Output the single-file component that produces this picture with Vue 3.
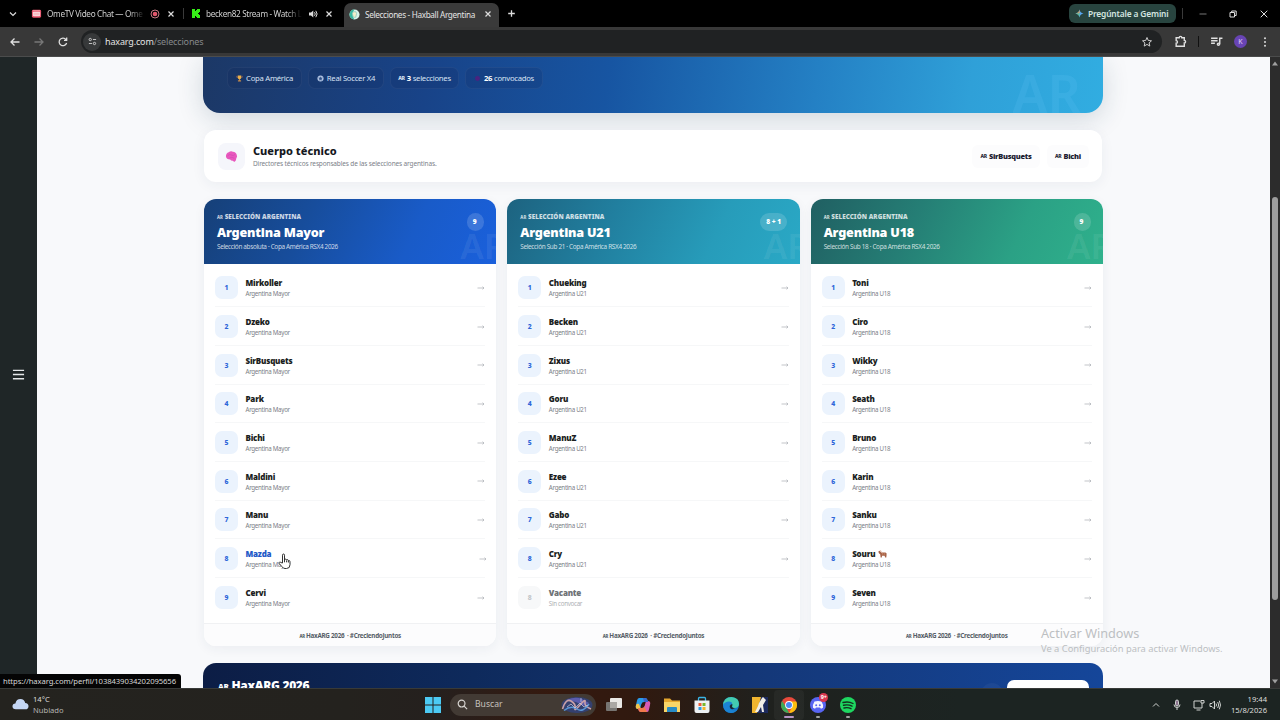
<script setup>
const chips = [
  { icon: 'cup', text: 'Copa América', width: 75 },
  { icon: 'ball', text: 'Real Soccer X4', width: 76 },
  { flag: true, strong: '3', text: 'selecciones', width: 69 },
  { icon: 'dot', strong: '26', text: 'convocados', width: 78 },
]

const teams = [
  {
    key: 'mayor',
    name: 'Argentina Mayor',
    detail: 'Selección absoluta · Copa América RSX4 2026',
    count: '9',
    players: ['Mirkoller', 'Dzeko', 'SirBusquets', 'Park', 'Bichi', 'Maldini', 'Manu', 'Mazda', 'Cervi'],
  },
  {
    key: 'u21',
    name: 'Argentina U21',
    detail: 'Selección Sub 21 · Copa América RSX4 2026',
    count: '8 + 1',
    players: ['Chueking', 'Becken', 'Zixus', 'Goru', 'ManuZ', 'Ezee', 'Gabo', 'Cry', 'Vacante'],
  },
  {
    key: 'u18',
    name: 'Argentina U18',
    detail: 'Selección Sub 18 · Copa América RSX4 2026',
    count: '9',
    players: ['Toni', 'Ciro', 'Wikky', 'Seath', 'Bruno', 'Karin', 'Sanku', 'Souru', 'Seven'],
  },
]

const isVacant = (player) => player === 'Vacante'
</script>

<template>
  <div class="screen">
    <div class="tabs">
      <svg class="tabs_chevron" viewBox="0 0 10 10"><path d="M2 3.5 5 6.5 8 3.5" /></svg>

      <div class="tab tab_ome">
        <svg class="favicon" viewBox="0 0 12 12">
          <rect x="1" y="2" width="10" height="8.5" rx="1.5" fill="#e8526a" />
          <rect x="2" y="4" width="8" height="5" rx="1" fill="#f9d5da" />
          <path d="M2 3h8M3 6.500h6" stroke="#f6a5ae" />
        </svg>
        <span class="tab_title">OmeTV Video Chat — Ome</span>
        <svg class="tab_rec" viewBox="0 0 10 10">
          <circle cx="5" cy="5" r="4" fill="none" stroke="#c47a84" />
          <circle cx="5" cy="5" r="2.300" fill="#e2566b" />
        </svg>
        <svg class="close" viewBox="0 0 8 8"><path d="M1.500 1.500l5 5M6.500 1.500l-5 5" /></svg>
      </div>

      <i class="tab_line"></i>

      <div class="tab tab_kick">
        <svg class="favicon" viewBox="0 0 10 10">
          <path d="M1 .500h3v2h1v-1h1v-1h3v3H8v1H7v1h1v1h1v3H6v-1H5v-1H4v2H1z" fill="#36ee17" />
        </svg>
        <span class="tab_title">becken82 Stream - Watch L</span>
        <svg class="tab_sound" viewBox="0 0 10 10">
          <path d="M1 3.500h2L5.300 1.500v7L3 6.500H1z" fill="#ddd" />
          <path d="M6.500 3.200q1.500 1.800 0 3.600M7.800 1.800q2.600 3.200 0 6.400" fill="none" stroke="#ddd" />
        </svg>
        <svg class="close" viewBox="0 0 8 8"><path d="M1.500 1.500l5 5M6.500 1.500l-5 5" /></svg>
      </div>

      <div class="tab tab_active">
        <svg class="favicon" viewBox="0 0 12 12">
          <circle cx="6" cy="6" r="5.500" fill="#d9f4e9" />
          <path d="M6 .500A5.500 5.500 0 0 0 6 11.500 8 8 0 0 1 6 .500" fill="#39b9a0" />
          <path d="M4.500 3h3l.800 2-1 4h-2.600l-1-4z" fill="#f3efc9" stroke="#64b8b3" stroke-width=".6" />
        </svg>
        <span class="tab_title">Selecciones - Haxball Argentina</span>
        <svg class="close" viewBox="0 0 8 8"><path d="M1.500 1.500l5 5M6.500 1.500l-5 5" /></svg>
      </div>

      <svg class="tabs_plus" viewBox="0 0 10 10"><path d="M5 2v6M2 5h6" /></svg>

      <div class="gemini">
        <svg viewBox="0 0 10 10">
          <path d="M5 .500Q5.600 4.400 9.500 5 5.600 5.600 5 9.500 4.400 5.600 .500 5 4.400 4.400 5 .500" fill="#58a6f2" />
          <path d="M5 .500Q5.300 3 5 5H.500Q4.400 4.400 5 .500" fill="#d8a25d" />
          <path d="M.500 5H5v4.500Q4.400 5.600 .500 5" fill="#5fc08a" />
        </svg>
        <span>Pregúntale a Gemini</span>
      </div>
      <i class="tab_line window_line"></i>
      <svg class="window_btn btn_min" viewBox="0 0 10 10"><path d="M1.500 5h7" stroke="#777" /></svg>
      <svg class="window_btn btn_max" viewBox="0 0 10 10">
        <path d="M2 3.500h4.500V8H2zM3.700 3.300V2h4.500v4.500H6.800" />
      </svg>
      <svg class="window_btn" viewBox="0 0 10 10"><path d="M1.700 1.700l6.600 6.600M8.300 1.700L1.700 8.300" /></svg>
    </div>

    <div class="toolbar">
      <svg class="nav_icon" viewBox="0 0 12 12"><path d="M10.500 6H2M5.500 2.500 2 6l3.500 3.500" /></svg>
      <svg class="nav_icon nav_off" viewBox="0 0 12 12"><path d="M1.500 6H10M6.500 2.500 10 6l-3.500 3.500" /></svg>
      <svg class="nav_icon" viewBox="0 0 12 12"><path d="M9.600 7A3.800 3.800 0 1 1 9 3.600M9.700 1.600v2.700H7" /></svg>
      <div class="address">
        <span class="site_info">
          <svg viewBox="0 0 10 10">
            <path d="M5.500 2.800H9M1 7.200h3.500" />
            <circle cx="2.500" cy="2.800" r="1.300" />
            <circle cx="7.200" cy="7.200" r="1.300" />
          </svg>
        </span>
        <span class="url">haxarg.com<em>/selecciones</em></span>
        <svg class="star" viewBox="0 0 12 12">
          <path d="M6 1.500l1.300 3 3.200.300-2.400 2.100.700 3.200L6 8.400l-2.800 1.700.700-3.200-2.400-2.100 3.200-.300z" />
        </svg>
      </div>
      <svg class="bar_icon icon_ext" viewBox="0 0 12 12">
        <path d="M2 2.500h2.800a1.200 1.200 0 0 1 2.400 0H9.500V5a1.200 1.200 0 0 1 0 2.400v3H2V7.600a1.200 1.200 0 0 0 0-2.400z" />
      </svg>
      <i class="bar_line"></i>
      <svg class="bar_icon icon_music" viewBox="0 0 12 12">
        <path d="M1 3h6M1 5.300h6M1 7.600h3.500M9 8.500V3h2.500" />
        <circle cx="7.800" cy="8.500" r="1" />
      </svg>
      <span class="avatar">K</span>
      <svg class="bar_dots" viewBox="0 0 4 12">
        <circle cx="2" cy="2.300" r="1" /><circle cx="2" cy="6" r="1" /><circle cx="2" cy="9.700" r="1" />
      </svg>
    </div>

    <div class="viewport">
      <aside class="sidebar">
        <svg viewBox="0 0 14 14"><path d="M1 2.500h12M1 7h12M1 11.500h12" /></svg>
      </aside>

      <main class="page">
        <section class="hero">
          <div v-for="chip in chips" :key="chip.text" class="chip" :style="{ width: chip.width + 'px' }">
            <svg v-if="chip.icon === 'cup'" viewBox="0 0 8 8">
              <path d="M2 .500h4v2.500q0 1.500-2 2-2-.500-2-2z" fill="#e8b04b" />
              <path d="M1 1v1.500l1 1M7 1v1.500l-1 1" fill="none" stroke="#d97b4a" stroke-width=".7" />
              <path d="M3.500 4.500h1v1.500h1.300v1.500H2.200V6h1.300z" fill="#c58a4a" />
            </svg>
            <svg v-else-if="chip.icon === 'ball'" viewBox="0 0 8 8">
              <circle cx="4" cy="4" r="3.500" fill="#b3c6e4" />
              <path d="M4 2.400l1.600 1.200L5 5.500H3L2.400 3.600zM1 2l1 .500M7 2l-1 .500M2 7l.600-1M6 7l-.600-1" fill="#2f4f86" stroke="#2f4f86" stroke-width=".5" />
            </svg>
            <svg v-else-if="chip.icon === 'dot'" viewBox="0 0 8 8"><circle cx="4" cy="4" r="2.800" fill="#4a2380" /></svg>
            <small v-if="chip.flag">AR</small>
            <span><b v-if="chip.strong">{{ chip.strong }}</b> {{ chip.text }}</span>
          </div>
          <span class="hero_mark">AR</span>
        </section>

        <section class="staff">
          <div class="staff_icon">
            <svg viewBox="0 0 14 14">
              <path d="M1 7Q1 3.500 4 2.500 6 .800 8.500 1.800 12 2 12.700 5.500q.800 2-.500 3.500 0 2.500-1.700 3.600Q9.500 13 8.500 11.500 7 12 5.500 10.300 1.500 10 1 7" fill="#e858bd" />
              <path d="M3 6q2-2 4-.500t4-1M5 8.500q2.500-1.500 5 .500" fill="none" stroke="#d64bb6" stroke-width=".9" />
            </svg>
          </div>
          <div class="staff_text">
            <h2>Cuerpo técnico</h2>
            <p>Directores técnicos responsables de las selecciones argentinas.</p>
          </div>
          <div class="coach"><small>AR</small><b>SirBusquets</b></div>
          <div class="coach coach_short"><small>AR</small><b>Bichi</b></div>
        </section>

        <div class="teams">
          <article v-for="team in teams" :key="team.key" class="team">
            <header :class="['team_head', team.key]">
              <p class="team_label"><small>AR</small> SELECCIÓN ARGENTINA</p>
              <h3>{{ team.name }}</h3>
              <p class="team_detail">{{ team.detail }}</p>
              <span class="team_mark">AR</span>
              <span class="team_count">{{ team.count }}</span>
            </header>
            <ul>
              <li
                  v-for="(player, index) in team.players"
                  :key="player"
                  :class="{ vacant: isVacant(player), hovered: player === 'Mazda' }"
              >
                <span class="number">{{ isVacant(player) ? 8 : index + 1 }}</span>
                <div class="player">
                  <b>
                    {{ player }}
                    <svg v-if="player === 'Souru'" viewBox="0 0 10 9">
                      <path d="M.500 1.500 2 .800l1.500 2h4.700l1.300 1v2.200l-.300 2.500H8L7.300 6.500H4.500L4.200 8.500H2.900L2.500 5 .800 3.500z" fill="#a86449" />
                      <path d="M2.500 .500l1.500 1.200M5 3.200v2M7 3.500v2" stroke="#d49270" stroke-width=".7" />
                    </svg>
                  </b>
                  <span>{{ isVacant(player) ? 'Sin convocar' : team.name }}</span>
                </div>
                <svg v-if="!isVacant(player)" class="arrow" viewBox="0 0 8 6">
                  <path d="M.500 3h6.500M5.500 1.700 7 3 5.500 4.300" />
                </svg>
              </li>
            </ul>
            <footer><small>AR</small> HaxARG 2026 &nbsp;· #CreciendoJuntos</footer>
          </article>
        </div>

        <section class="closing">
          <h2><small>AR</small> HaxARG 2026</h2>
          <i class="closing_glow"></i>
          <i class="closing_btn"></i>
        </section>

        <div class="activate">
          <p class="activate_title">Activar Windows</p>
          <p class="activate_text">Ve a Configuración para activar Windows.</p>
        </div>
      </main>

      <div class="scrollbar">
        <svg viewBox="0 0 6 5"><path d="M3 .500 6 4.500H0z" /></svg>
        <i></i>
        <svg viewBox="0 0 6 5"><path d="M3 4.500 6 .500H0z" /></svg>
      </div>

      <div class="status">https://haxarg.com/perfil/1038439034202095656</div>
      <svg class="pointer" viewBox="0 0 13 17">
        <path d="M4.500 10V2.200q0-1.200 1-1.200t1 1.200V7q.200-1 1.100-.900 1 .100 1 1.100.300-.800 1-.600.800.200.800 1.200.300-.500.900-.300.700.200.700 1.200v3q0 3.800-3.500 3.800H7Q5.200 15.500 4 13.700L1.200 10.500q-.600-.900.200-1.300.800-.400 1.600.400z" />
        <path d="M6.500 7v2.300M8.600 7.500v1.800M10.400 8v1.500" />
      </svg>
    </div>

    <div class="taskbar">
      <div class="weather">
        <svg viewBox="0 0 18 13">
          <path d="M4 12Q.500 12 .500 8.800.500 6 3.600 5.700 4.500 1 9 1q4 0 5 4.200 3.500.300 3.500 3.500Q17.500 12 14 12z" fill="#c5d7f5" />
        </svg>
        <p>14°C<br><span>Nublado</span></p>
      </div>

      <div class="apps">
        <svg class="app_win" viewBox="0 0 16 16">
          <path d="M0 0h7.500v7.500H0zM8.500 0H16v7.500H8.500zM0 8.500h7.500V16H0zM8.500 8.500H16V16H8.500z" fill="#4ccaf4" />
        </svg>
        <div class="search">
          <svg class="search_icon" viewBox="0 0 12 12"><circle cx="5" cy="5" r="3.700" /><path d="M7.800 7.800 11 11" /></svg>
          <span>Buscar</span>
          <svg class="search_art" viewBox="0 0 32 18">
            <ellipse cx="16" cy="9" rx="15.500" ry="8" fill="#34406f" />
            <path d="M6 4q8-4 15-1l7 4-5 3-8-4z" fill="#5b5cae" />
            <path d="M1.500 13Q5 2 10 5t4 7 5-3 5-3 6 7" fill="none" stroke="#c9a0a8" stroke-width="1.600" />
            <path d="M3 14.500Q10 9 16 13t12-5" fill="none" stroke="#5a96d6" stroke-width="1.500" />
            <path d="M6 11l4-3 4 4 5-5 4 4 4-2M20 2v4" fill="none" stroke="#d4d2e5" stroke-width=".7" />
          </svg>
        </div>
        <svg class="app" viewBox="0 0 18 18">
          <rect x="1" y="6" width="11" height="9" rx="1" fill="#777572" />
          <rect x="5" y="2" width="12" height="10" rx="1" fill="#e9e7e4" />
          <path d="M5 6h7v6H5z" fill="#aaa7a3" />
        </svg>
        <svg class="app" viewBox="0 0 18 18">
          <path d="M5 2h6q2 0 2.500 2l.700 2H10Q8 6 7.300 8.300L6 13H4q-3 0-2-4l1-4.500Q3.500 2 5 2" fill="#2a9be8" />
          <path d="M2 9q1-2 3-1l2 5H4q-3 0-2-4" fill="#f1c34b" />
          <path d="M13 16H7q-2 0-2.500-2l-.500-2h4q2 0 2.700-2.300L12 5h2q3 0 2 4l-1 4.500q-.500 2.500-2 2.500" fill="#d65bb5" />
          <path d="M13 16H7q-2 0-2.500-2l-.500-2h4q2 0 2.500-1.500z" fill="#f0794b" />
          <path d="M9 2h2q2 0 2.500 2l.700 2H10z" fill="#3866ce" />
        </svg>
        <svg class="app" viewBox="0 0 18 18">
          <path d="M1 2.500h6l2 2h8V15H1z" fill="#e5a72e" />
          <path d="M1 6h16v10H1z" fill="#f8d568" />
          <path d="M4 16v-4q0-1 1-1h8q1 0 1 1v4z" fill="#278bc5" />
        </svg>
        <svg class="app" viewBox="0 0 18 18">
          <path d="M5.500 5V2.500q0-1 1-1h5q1 0 1 1V5" fill="none" stroke="#3bb5e6" stroke-width="1.300" />
          <path d="M1.500 4.500h15V15q0 2-2 2h-11q-2 0-2-2z" fill="#eef1f3" />
          <path d="M5.500 7h3v3h-3z" fill="#ef5b35" /><path d="M9.500 7h3v3h-3z" fill="#79b72c" />
          <path d="M5.500 11h3v3h-3z" fill="#2e9ce2" /><path d="M9.500 11h3v3h-3z" fill="#f4b52b" />
        </svg>
        <svg class="app" viewBox="0 0 18 18">
          <circle cx="9" cy="9" r="8" fill="#1579c8" />
          <path d="M1 9Q2 1 9.500 1 17 1.500 17 8q-.300 4-4.500 4-3 0-2.500-2 1-4-3-4-4 .300-6 3" fill="#43cbb0" />
          <path d="M1 9q2-3.500 6-3.500 3 .200 3.300 2.500-2.300-.500-2.800 2-.200 4 4.500 4.500 2 0 4-1.500-3 4-7 4Q1.500 16.500 1 9" fill="#1b83d3" />
          <path d="M10.300 8q.300 1-.300 2.500.300 1.700 3 1.500-2.500 2-4.500.500Q6.300 9 10.300 8" fill="#1d2430" />
        </svg>
        <svg class="app" viewBox="0 0 18 18">
          <path d="M1 1h16v16H1z" fill="#1c2a5e" />
          <path d="M1 1h9L6 17H1z" fill="#f0b52f" />
          <path d="M11 2 8 7l-1 3-3 6h3l3-5 1 5h2l-1-7 3-5-3-3z" fill="#f1eee8" />
        </svg>
        <div class="app_slot app_current">
          <svg class="app" viewBox="0 0 18 18">
            <circle cx="9" cy="9" r="8" fill="#e84335" />
            <path d="M2.100 5 6 11l3 6A8 8 0 0 1 2.100 5" fill="#35a853" />
            <path d="M16.200 5.500H9l3.500 5L9 17A8 8 0 0 0 16.200 5.500" fill="#fabd05" />
            <circle cx="9" cy="9" r="3.900" fill="#fff" /><circle cx="9" cy="9" r="3" fill="#4285f4" />
          </svg>
        </div>
        <div class="app_slot">
          <svg class="app" viewBox="0 0 18 18">
            <circle cx="9" cy="9" r="8" fill="#5865f2" />
            <path d="M5.500 5.500Q9 4.300 12.500 5.500 14.500 8.500 14 11.800l-2 1-1-1.300H7l-1 1.300-2-1q-.500-3.300 1.500-6.300" fill="#f5f5ff" />
            <circle cx="7.200" cy="9.200" r="1" fill="#5865f2" /><circle cx="10.800" cy="9.200" r="1" fill="#5865f2" />
          </svg>
          <span class="unread">9+</span>
        </div>
        <div class="app_slot">
          <svg class="app" viewBox="0 0 18 18">
            <circle cx="9" cy="9" r="8" fill="#1ed760" />
            <path d="M4 6.500q5.500-1.500 10 1M4.500 9.300q4.700-1.200 8.500.900M5 12q4-1 7 .700" fill="none" stroke="#12301e" stroke-width="1.400" stroke-linecap="round" />
          </svg>
        </div>
      </div>

      <div class="tray">
        <svg class="tray_up" viewBox="0 0 10 10"><path d="M2 6.500 5 3.500 8 6.500" /></svg>
        <svg class="tray_mic" viewBox="0 0 10 12">
          <rect x="3.500" y="1" width="3" height="6" rx="1.500" fill="#8d7590" />
          <path d="M2 5.500q0 3 3 3t3-3M5 8.500V11" />
        </svg>
        <svg class="tray_net" viewBox="0 0 12 12"><path d="M7.500 2H1v7h8V6M3.500 11h4M9 6V4M8 1.500h3v2.500H8z" /></svg>
        <svg class="tray_vol" viewBox="0 0 12 12">
          <path d="M1 4.500h2L5.500 2v8L3 7.500H1zM7 4.500q1 1.500 0 3M8.700 3q2 3 0 6M10.300 1.700q2.400 4.300 0 8.600" />
        </svg>
        <p>19:44<br>15/8/2026</p>
      </div>
    </div>
  </div>
</template>

<style>
body {
  margin: 0;
  overflow: hidden;
}
</style>

<style scoped>
* {
  box-sizing: border-box;
}

p, h2, h3, ul {
  margin: 0;
  padding: 0;
}

svg {
  display: block;
  flex: none;
}

.screen {
  width: 1280px;
  height: 720px;
  display: flex;
  flex-direction: column;
  overflow: hidden;
  background: #202322;
  font-family: "Noto Sans", "Open Sans", sans-serif;
  white-space: nowrap;
}

/* browser */
.tabs {
  height: 27px;
  flex: none;
  display: flex;
  align-items: center;
  background: #000;
  color: #cfcfcf;
  font-size: 8.2px;
  letter-spacing: -0.33px;
}

.tabs_chevron, .tabs_plus, .close, .window_btn {
  fill: none;
  stroke: #ddd;
  stroke-width: 1.2;
}

.tabs_chevron {
  width: 10px;
  margin-left: 8px;
}

.tab {
  height: 27px;
  flex: none;
  display: flex;
  align-items: center;
}

.tab_ome {
  width: 165px;
  padding-left: 13px;
}

.tab_kick {
  width: 150px;
  padding-left: 7px;
}

.tab_title {
  width: 100px;
  flex: none;
  margin-left: 5px;
  overflow: hidden;
}

.tab_kick .tab_title {
  width: 98px;
}

.tab_ome .tab_title, .tab_kick .tab_title {
  mask-image: linear-gradient(90deg, #000 82%, transparent 98%);
}

.favicon {
  width: 11px;
  height: 11px;
}

.tab_kick .favicon {
  width: 10px;
}

.tab_rec {
  width: 10px;
  margin-left: 3px;
}

.tab_sound {
  width: 10px;
  margin-left: 4px;
}

.close {
  width: 8px;
  margin-left: auto;
}

.tab_ome .close {
  margin-right: 8px;
}

.tab_line {
  width: 1px;
  height: 11px;
  background: #3a3a3a;
}

.tab_kick .close {
  margin-right: 1px;
}

.tab_active {
  width: 155px;
  height: 24px;
  align-self: flex-end;
  margin-left: 10px;
  padding: 0 7px 2px 5px;
  border-radius: 7px 7px 0 0;
  background: #3a3a3a;
  color: #e4e4e4;
}

.tab_active .tab_title {
  width: 117px;
}

.tabs_plus {
  width: 11px;
  margin-left: 7px;
}

.gemini {
  width: 107px;
  height: 19px;
  margin-left: auto;
  padding-left: 6px;
  display: flex;
  align-items: center;
  border-radius: 6px;
  background: #28443f;
  color: #d5e6e0;
  font-size: 8.4px;
  font-weight: 600;
  letter-spacing: -0.15px;
}

.gemini svg {
  width: 9px;
  margin-right: 4px;
}

.window_line {
  margin: 0 15px 0 6px;
}

.window_btn {
  width: 10px;
  margin-right: 11px;
  stroke-width: 1;
}

.btn_min {
  margin-right: 20px;
}

.btn_max {
  margin-right: 21px;
}

.toolbar {
  height: 30px;
  flex: none;
  display: flex;
  align-items: center;
  padding-left: 9px;
  border-bottom: 1px solid #4b4c4c;
  background: #383838;
}

.nav_icon {
  width: 12px;
  margin-right: 12px;
  fill: none;
  stroke: #e1e1e1;
  stroke-width: 1.3;
}

.nav_off {
  stroke: #777;
}

.address {
  width: 1081px;
  height: 23px;
  flex: none;
  display: flex;
  align-items: center;
  padding: 0 9px 0 2px;
  border-radius: 12px;
  background: #202223;
}

.site_info {
  width: 18px;
  height: 18px;
  display: flex;
  align-items: center;
  justify-content: center;
  border-radius: 50%;
  background: #37393a;
}

.site_info svg {
  width: 9px;
  fill: none;
  stroke: #d5d5d5;
}

.url {
  margin-left: 4px;
  color: #e4e4e4;
  font-size: 9px;
  letter-spacing: -0.15px;
}

.url em {
  color: #86898b;
  font-style: normal;
}

.star {
  width: 12px;
  margin-left: auto;
  fill: none;
  stroke: #ccc;
}

.bar_icon {
  width: 13px;
  fill: none;
  stroke: #e0e0e0;
  stroke-width: 1.3;
}

.icon_ext {
  margin-left: 12px;
}

.bar_line {
  width: 1px;
  height: 11px;
  margin: 0 11px 0 11px;
  background: #111;
}

.avatar {
  width: 13px;
  height: 13px;
  margin: 0 16px 0 11px;
  border-radius: 50%;
  background: #6844b4;
  color: #e0d4f5;
  font-size: 7px;
  line-height: 13px;
  text-align: center;
}

.bar_dots {
  width: 4px;
  fill: #ddd;
}

/* page */
.viewport {
  position: relative;
  height: 631px;
  flex: none;
  display: flex;
  overflow: hidden;
  background: #f8f9fb;
}

.sidebar {
  width: 37px;
  flex: none;
  display: flex;
  align-items: center;
  justify-content: center;
  background: #1f2627;
}

.sidebar svg {
  width: 13px;
  margin-top: 4px;
  stroke: #e4e7e8;
  stroke-width: 1.5;
}

.page {
  width: 1233px;
  height: 631px;
  display: flex;
  flex-direction: column;
  padding-left: 167px;
  overflow: hidden;
}

.hero {
  position: relative;
  width: 900px;
  height: 56px;
  flex: none;
  display: flex;
  gap: 6px;
  margin-left: -1px;
  padding: 10px 0 0 24px;
  border-radius: 0 0 17px 17px;
  background: linear-gradient(98deg, #1c3866 0%, #184388 25%, #1755a2 45%, #2480c4 68%, #2fa0d8 85%, #31ade1 100%);
  box-shadow: 0 6px 26px rgba(30, 60, 85, 0.18);
}

.chip {
  height: 22px;
  display: flex;
  align-items: center;
  justify-content: center;
  gap: 3px;
  border: 1px solid rgba(255, 255, 255, 0.05);
  border-radius: 7px;
  background: rgba(10, 30, 80, 0.16);
  color: #d8e3f3;
  font-size: 7.7px;
  letter-spacing: -0.27px;
}

.chip svg {
  width: 7px;
}

.chip b {
  color: #fff;
}

.chip small {
  margin-right: -1px;
}

small {
  font-size: 0.68em;
  font-weight: 800;
}

.hero_mark {
  position: absolute;
  right: 22px;
  bottom: 0;
  height: 43px;
  overflow: hidden;
  color: rgba(90, 190, 240, 0.22);
  font-size: 52px;
  font-weight: 600;
  line-height: 45px;
}

.staff {
  width: 898px;
  height: 52px;
  flex: none;
  display: flex;
  align-items: center;
  gap: 7px;
  margin-top: 17px;
  padding: 0 13px 0 14px;
  border-radius: 12px;
  background: #fff;
  box-shadow: 0 3px 14px rgba(30, 50, 80, 0.06);
  z-index: 1;
}

.staff_icon {
  width: 27px;
  height: 27px;
  display: flex;
  align-items: center;
  justify-content: center;
  border-radius: 8px;
  background: #f5f6fb;
}

.staff_icon svg {
  width: 13px;
}

.staff_text {
  flex: 1;
  padding-left: 1px;
}

.staff h2 {
  color: #16191e;
  font-size: 11px;
  font-weight: 800;
  line-height: 14px;
}

.staff p {
  color: #7c8189;
  font-size: 6.5px;
  letter-spacing: -0.14px;
  line-height: 11px;
}

.coach {
  width: 68px;
  height: 23px;
  display: flex;
  align-items: center;
  justify-content: center;
  gap: 2px;
  border-radius: 6px;
  background: #fcfcfd;
  color: #1b2030;
  font-size: 7.4px;
  letter-spacing: -0.25px;
}

.coach b {
  font-weight: 900;
}

.coach_short {
  width: 42px;
}

.teams {
  width: 899px;
  display: grid;
  grid-template-columns: repeat(3, 1fr);
  gap: 11px;
  margin-top: 17px;
}

.team {
  height: 447px;
  display: flex;
  flex-direction: column;
  border-radius: 12px;
  background: #fff;
  box-shadow: 0 3px 12px rgba(30, 50, 80, 0.06);
  overflow: hidden;
}

.team_head {
  position: relative;
  height: 65px;
  flex: none;
  padding: 12px 13px 0;
  color: #fff;
  overflow: hidden;
}

.mayor {
  background: linear-gradient(115deg, #164078 0%, #174d9c 35%, #195bc8 70%, #1a60dc 100%);
}

.u21 {
  background: linear-gradient(115deg, #1d6380 0%, #217f9f 35%, #279cba 70%, #2aa9c6 100%);
}

.u18 {
  background: linear-gradient(115deg, #205f62 0%, #257e75 35%, #2ba185 70%, #2fb18c 100%);
}

.team_label {
  color: rgba(255, 255, 255, 0.78);
  font-size: 6.3px;
  font-weight: 900;
  letter-spacing: 0.05px;
  line-height: 11px;
}

.team_head h3 {
  font-size: 12.6px;
  font-weight: 900;
  letter-spacing: -0.2px;
  line-height: 20px;
}

.team_detail {
  color: rgba(255, 255, 255, 0.78);
  font-size: 6.4px;
  letter-spacing: -0.33px;
  line-height: 8px;
}

.team_count {
  position: absolute;
  top: 14px;
  right: 12.500px;
  min-width: 17px;
  height: 18px;
  padding: 0 6px;
  border-radius: 9px;
  background: rgba(255, 255, 255, 0.15);
  font-size: 6.6px;
  font-weight: 900;
  line-height: 18px;
}

.team_mark {
  position: absolute;
  top: 34px;
  right: -10px;
  color: rgba(255, 255, 255, 0.08);
  font-size: 35px;
  font-weight: 600;
  line-height: 26px;
}

.team ul {
  flex: 1;
  padding: 4.500px 11px 0;
  list-style: none;
}

.team li {
  height: 38.7px;
  display: flex;
  align-items: center;
  border-bottom: 1px solid #f6f7f8;
}

.team li:last-child {
  border-bottom: 0;
}

.number {
  width: 23px;
  height: 23px;
  margin-top: 1px;
  border-radius: 7px;
  background: #ebf3fd;
  color: #2e66d9;
  font-size: 6.8px;
  font-weight: 800;
  line-height: 23px;
  text-align: center;
}

.player {
  flex: 1;
  display: flex;
  flex-direction: column;
  margin-left: 7.500px;
  padding-top: 2px;
}

.player b {
  display: flex;
  gap: 3px;
  color: #1b1e22;
  font-size: 8px;
  font-weight: 900;
  letter-spacing: -0.2px;
  line-height: 11px;
}

.player b svg {
  width: 9px;
  margin-top: 1px;
}

.player span {
  color: #7b8087;
  font-size: 6.2px;
  letter-spacing: -0.3px;
  line-height: 11px;
}

.arrow {
  width: 8px;
  margin-top: 1px;
  fill: none;
  stroke: #a9adb3;
  stroke-width: 0.7;
}

.hovered .player b {
  color: #2259c7;
}

.hovered .arrow {
  margin-right: -2px;
}

.vacant .number {
  background: #f7f8f9;
  color: #c3c6ca;
}

.vacant .player b {
  color: #6e7276;
}

.vacant .player span {
  color: #adb0b4;
}

.team footer {
  height: 23px;
  border-top: 1px solid #f0f1f3;
  background: #fcfcfd;
  color: #565e67;
  font-size: 6.3px;
  font-weight: 700;
  letter-spacing: -0.28px;
  line-height: 23px;
  text-align: center;
}

.closing {
  position: relative;
  width: 900px;
  height: 60px;
  flex: none;
  margin: 17px 0 0 -1px;
  padding: 14px 15px;
  border-radius: 13px 13px 0 0;
  background: linear-gradient(95deg, #0c1d45 0%, #0e2a5c 30%, #143777 60%, #15469a 100%);
}

.closing h2 {
  color: #fff;
  font-size: 12px;
  font-weight: 900;
  letter-spacing: -0.3px;
  line-height: 18px;
}

.closing_btn {
  position: absolute;
  top: 17px;
  right: 14px;
  width: 82px;
  height: 30px;
  border-radius: 7px;
  background: #fff;
}

.closing_glow {
  position: absolute;
  top: 20px;
  right: 100px;
  width: 22px;
  height: 22px;
  border-radius: 50%;
  background: rgba(255, 255, 255, 0.04);
}

.scrollbar {
  width: 10px;
  flex: none;
  display: flex;
  flex-direction: column;
  align-items: center;
  background: #2c2c2c;
}

.scrollbar svg {
  width: 6px;
  margin: 4px 0;
  fill: #9f9f9f;
}

.scrollbar i {
  width: 6px;
  height: 403px;
  margin: 127px 0 auto;
  border-radius: 3px;
  background: #9d9d9d;
}

.status {
  position: absolute;
  left: 0;
  bottom: 0;
  width: 181px;
  height: 14px;
  padding-left: 3px;
  border-radius: 0 3px 0 0;
  background: #050505;
  color: #d6d6d6;
  font-size: 7.7px;
  letter-spacing: -0.1px;
  line-height: 14px;
}

.pointer {
  position: absolute;
  top: 496px;
  left: 278px;
  width: 13px;
  fill: #fff;
  stroke: #333;
  stroke-width: 1;
}

.activate {
  position: absolute;
  top: 568px;
  left: 1041px;
  color: #bcbfc2;
}

.activate_title {
  font-size: 12.7px;
  line-height: 17px;
}

.activate_text {
  font-size: 9.35px;
  line-height: 14px;
}

/* taskbar */
.taskbar {
  position: relative;
  height: 32px;
  display: flex;
  align-items: center;
  border-top: 1px solid #383a38;
  background: linear-gradient(90deg, #24231f 0%, #24221e 27%, #25201e 34%, #35190f 43%, #30190f 50%, #1f211e 60%, #1c2422 75%, #1c2422 100%);
  color: #dcdcda;
  font-size: 7.6px;
  line-height: 10.500px;
}

.weather {
  width: 425px;
  display: flex;
  align-items: center;
  gap: 4px;
  padding-left: 12px;
}

.weather svg {
  width: 17px;
}

.weather span {
  color: #b5b4b1;
}

.apps {
  display: flex;
  align-items: center;
}

.app_win {
  width: 16px;
  margin-right: 9px;
}

.search {
  width: 146px;
  height: 22px;
  display: flex;
  align-items: center;
  margin-right: 9px;
  padding: 0 3px 0 7px;
  border-radius: 11px;
  background: #423a34;
  color: #c6c2be;
  font-size: 8.6px;
}

.search_icon {
  width: 11px;
  margin-right: 7px;
  fill: none;
  stroke: #d8d5d2;
  stroke-width: 1.3;
}

.search_art {
  width: 32px;
  margin-left: auto;
}

.app {
  width: 18px;
  margin-right: 11.200px;
}

.app_slot {
  position: relative;
}

.app_slot::after {
  content: "";
  position: absolute;
  left: 7px;
  bottom: -4px;
  width: 4px;
  height: 1.500px;
  border-radius: 1px;
  background: #a2a4a2;
}

.app_current::before {
  content: "";
  position: absolute;
  left: -6px;
  top: -6px;
  width: 30px;
  height: 30px;
  border-radius: 4px;
  background: rgba(255, 255, 255, 0.04);
}

.app_current::after {
  left: 4px;
  width: 10px;
  height: 2px;
  background: #b795c4;
}

.unread {
  position: absolute;
  top: -3px;
  left: 10px;
  width: 9px;
  height: 9px;
  border-radius: 50%;
  background: #d8364f;
  color: #fff;
  font-size: 5.5px;
  font-weight: 700;
  line-height: 9px;
  text-align: center;
}

.tray {
  display: flex;
  align-items: center;
  margin-left: auto;
  padding-right: 13px;
}

.tray svg {
  fill: none;
  stroke: #cfd2d0;
  stroke-width: 1;
}

.tray_up {
  width: 10px;
  margin-right: 11px;
}

.tray_mic {
  width: 10px;
  margin-right: 11px;
}

.tray_net {
  width: 12px;
  margin-right: 4px;
}

.tray_vol {
  width: 12px;
  margin-right: 10px;
}

.tray p {
  text-align: right;
}
</style>
